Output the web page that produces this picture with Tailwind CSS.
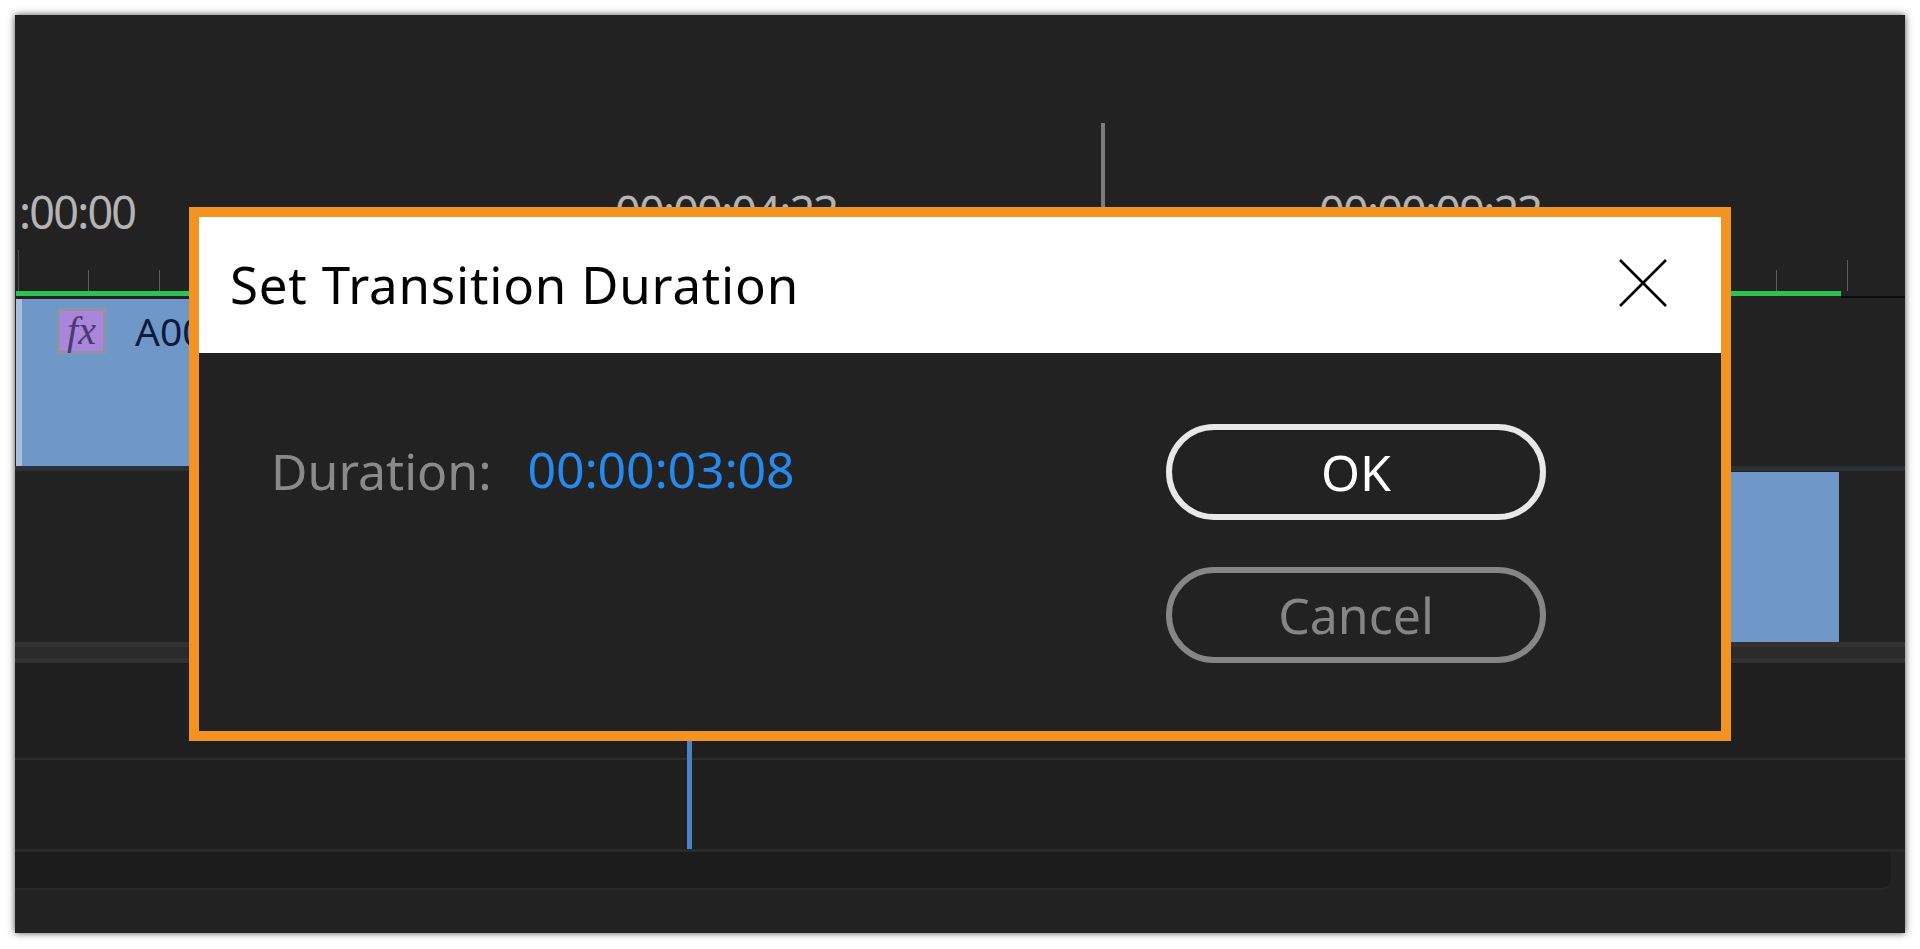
<!DOCTYPE html>
<html><head><meta charset="utf-8"><script src="https://cdn.jsdelivr.net/npm/@tailwindcss/browser@4"></script><title>Set Transition Duration</title></head>
<body class="bg-white overflow-hidden font-['Noto_Sans',sans-serif]">
<div class="h-[949px] w-[1920px] pt-[15px] pl-[15px]">
<div class="relative w-[1890px] h-[918px] bg-[#222222] shadow-[0_0_7px_rgba(0,0,0,0.7)] flex flex-col overflow-hidden">
  <!-- ruler -->
  <div class="relative h-[276px] shrink-0">
    <div class="absolute left-[1086px] top-[108px] w-[4px] h-[90px] bg-[#7c7c7c]"></div>
    <span class="absolute left-[4px] top-[172px] text-[45px] leading-[50px] text-[#b4b4b4] tracking-[-1.8px]">:00:00</span>
    <span class="absolute left-[600px] top-[172px] text-[45px] leading-[50px] text-[#b4b4b4] tracking-[-1.8px]">00:00:04:23</span>
    <span class="absolute left-[1304px] top-[172px] text-[45px] leading-[50px] text-[#b4b4b4] tracking-[-1.8px]">00:00:09:23</span>
    <div class="absolute left-[3px] top-[235px] w-[1px] h-[41px] bg-[#4a4a4a]"></div>
    <div class="absolute left-[73px] top-[255px] w-[1px] h-[21px] bg-[#5c5c5c]"></div>
    <div class="absolute left-[144px] top-[255px] w-[1px] h-[21px] bg-[#5c5c5c]"></div>
    <div class="absolute left-[1761px] top-[255px] w-[1px] h-[21px] bg-[#5c5c5c]"></div>
    <div class="absolute left-[1832px] top-[245px] w-[1px] h-[31px] bg-[#5c5c5c]"></div>
  </div>
  <!-- work area bar -->
  <div class="flex h-[8px] shrink-0 pl-[1px]">
    <div class="w-[1825px] h-[5px] bg-[#2dc252]"></div>
    <div class="flex-1 mt-[5px] h-[2px] bg-[#0c0c0c]"></div>
  </div>
  <!-- video track -->
  <div class="h-[167px] shrink-0 pl-[1px] flex">
    <div class="w-[1000px] h-full bg-[#6f98c8] border-l-[6px] border-[#aabfdb] relative flex items-start pl-[35px] pt-[9px] gap-[29px]">
      <div class="w-[49px] h-[46px] bg-[#a985dc] border-[3px] border-[#8f93a8] flex items-center justify-center italic font-['Liberation_Serif',serif] text-[#4a3a70] text-[40px] leading-none">fx</div>
      <span class="text-[#0d1a3d] text-[39px] leading-[43px] mt-[1px]">A00</span>
    </div>
  </div>
  <!-- audio track -->
  <div class="h-[176px] shrink-0 flex justify-end border-t-[5px] border-[#2b2f36]">
    <div class="w-[500px] h-full bg-[#6f98c8] mr-[66px] mt-[1px]"></div>
  </div>
  <!-- divider -->
  <div class="h-[21px] shrink-0 bg-[#2a2a2a] border-y-[5px] border-[#323232]"></div>
  <!-- lower tracks -->
  <div class="h-[97px] shrink-0 bg-[#1f1f1f] border-b-[2px] border-[#2c2c2c]"></div>
  <div class="h-[92px] shrink-0 bg-[#1f1f1f] border-b-[3px] border-[#2a2a2a]"></div>
  <!-- scrollbar -->
  <div class="h-[38px] shrink-0 mr-[14px] bg-[#1c1c1c] border-b-[2px] border-[#292929] rounded-br-[10px]"></div>
  <div class="flex-1"></div>
  <div class="absolute left-[672px] top-[725px] w-[5px] h-[109px] bg-[#4a82c4]"></div>

  <!-- dialog -->
  <div class="absolute left-[174px] top-[192px] w-[1542px] h-[534px] border-[10px] border-[#f39322] bg-[#222222] flex flex-col">
    <div class="h-[136px] shrink-0 bg-white flex items-center justify-between pl-[31px] pr-[54px]">
      <span class="text-[51px] leading-[60px] text-black tracking-[0.8px] mb-[2px]">Set Transition Duration</span>
      <svg class="w-[48px] h-[48px] mb-[4px]" viewBox="0 0 48 48" fill="none" stroke="#000" stroke-width="2.6"><path d="M1 1 47 47M47 1 1 47"/></svg>
    </div>
    <div class="flex-1 flex justify-between pl-[72px] pr-[175px] pt-[71px]">
      <div class="flex items-start gap-[36px] h-[96px]">
        <span class="text-[50px] leading-[62px] mt-[16px] text-[#8a8a8a]">Duration:</span>
        <span class="text-[50px] leading-[60px] mt-[15px] tracking-[-0.2px] text-[#2589ee]">00:00:03:08</span>
      </div>
      <div class="flex flex-col gap-[47px]">
        <div class="w-[380px] h-[96px] rounded-[48px] border-[6px] border-[#e8e8e8] flex items-center justify-center text-[50px] text-white">OK</div>
        <div class="w-[380px] h-[96px] rounded-[48px] border-[6px] border-[#868686] flex items-center justify-center text-[50px] text-[#858585]">Cancel</div>
      </div>
    </div>
  </div>
</div>
</div>
</body></html>
